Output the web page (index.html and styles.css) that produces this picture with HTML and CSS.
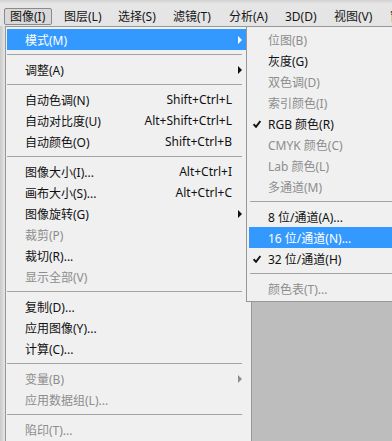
FILE: index.html
```html
<!DOCTYPE html>
<html lang="zh-CN">
<head>
<meta charset="utf-8">
<title>图像菜单</title>
<link rel="stylesheet" href="styles.css">
</head>
<body>
<div class="app">
  <div class="menubar">
    <span class="mb-item active">图像(I)</span>
    <span class="mb-item">图层(L)</span>
    <span class="mb-item">选择(S)</span>
    <span class="mb-item">滤镜(T)</span>
    <span class="mb-item">分析(A)</span>
    <span class="mb-item">3D(D)</span>
    <span class="mb-item">视图(V)</span>
    <span class="mb-item">窗口(W)</span>
  </div>
  <div class="workspace">
    <div class="left-panel"></div>
    <div class="canvas-area"></div>
  </div>

  <div class="menu main-menu">
    <div class="row hl"><span class="label">模式(M)</span><span class="arrow-cell"><i class="tri"></i></span></div>
    <div class="sep"></div>
    <div class="row"><span class="label">调整(A)</span><span class="arrow-cell"><i class="tri"></i></span></div>
    <div class="sep"></div>
    <div class="row"><span class="label">自动色调(N)</span><span class="shortcut">Shift+Ctrl+L</span><span class="arrow-cell"></span></div>
    <div class="row"><span class="label">自动对比度(U)</span><span class="shortcut">Alt+Shift+Ctrl+L</span><span class="arrow-cell"></span></div>
    <div class="row"><span class="label">自动颜色(O)</span><span class="shortcut">Shift+Ctrl+B</span><span class="arrow-cell"></span></div>
    <div class="sep"></div>
    <div class="row"><span class="label">图像大小(I)...</span><span class="shortcut">Alt+Ctrl+I</span><span class="arrow-cell"></span></div>
    <div class="row"><span class="label">画布大小(S)...</span><span class="shortcut">Alt+Ctrl+C</span><span class="arrow-cell"></span></div>
    <div class="row"><span class="label">图像旋转(G)</span><span class="arrow-cell"><i class="tri"></i></span></div>
    <div class="row dis"><span class="label">裁剪(P)</span><span class="arrow-cell"></span></div>
    <div class="row"><span class="label">裁切(R)...</span><span class="arrow-cell"></span></div>
    <div class="row dis"><span class="label">显示全部(V)</span><span class="arrow-cell"></span></div>
    <div class="sep"></div>
    <div class="row"><span class="label">复制(D)...</span><span class="arrow-cell"></span></div>
    <div class="row"><span class="label">应用图像(Y)...</span><span class="arrow-cell"></span></div>
    <div class="row"><span class="label">计算(C)...</span><span class="arrow-cell"></span></div>
    <div class="sep"></div>
    <div class="row dis"><span class="label">变量(B)</span><span class="arrow-cell"><i class="tri"></i></span></div>
    <div class="row dis"><span class="label">应用数据组(L)...</span><span class="arrow-cell"></span></div>
    <div class="sep"></div>
    <div class="row dis"><span class="label">陷印(T)...</span><span class="arrow-cell"></span></div>
  </div>

  <div class="menu sub-menu">
    <div class="srow dis"><span class="check"></span><span class="label">位图(B)</span></div>
    <div class="srow"><span class="check"></span><span class="label">灰度(G)</span></div>
    <div class="srow dis"><span class="check"></span><span class="label">双色调(D)</span></div>
    <div class="srow dis"><span class="check"></span><span class="label">索引颜色(I)</span></div>
    <div class="srow"><span class="check"><svg width="8" height="8" viewBox="0 0 8 8"><path d="M0.6 4.2 L3 6.8 L7.4 1" fill="none" stroke="#111" stroke-width="1.9"/></svg></span><span class="label">RGB 颜色(R)</span></div>
    <div class="srow dis"><span class="check"></span><span class="label">CMYK 颜色(C)</span></div>
    <div class="srow dis"><span class="check"></span><span class="label">Lab 颜色(L)</span></div>
    <div class="srow dis"><span class="check"></span><span class="label">多通道(M)</span></div>
    <div class="ssep"></div>
    <div class="srow"><span class="check"></span><span class="label">8 位/通道(A)...</span></div>
    <div class="srow hl"><span class="check"></span><span class="label">16 位/通道(N)...</span></div>
    <div class="srow"><span class="check"><svg width="8" height="8" viewBox="0 0 8 8"><path d="M0.6 4.2 L3 6.8 L7.4 1" fill="none" stroke="#111" stroke-width="1.9"/></svg></span><span class="label">32 位/通道(H)</span></div>
    <div class="ssep"></div>
    <div class="srow dis"><span class="check"></span><span class="label">颜色表(T)...</span></div>
  </div>
</div>
</body>
</html>
```

FILE: styles.css
```css
* { box-sizing: border-box; }

html, body {
  margin: 0;
  padding: 0;
  width: 392px;
  height: 441px;
  overflow: hidden;
}

body {
  font-family: "Noto Sans", "Noto Sans CJK SC", sans-serif;
  font-size: 12px;
  color: #111;
  background: #bdbdbd;
}

.app {
  position: relative;
  width: 392px;
  height: 441px;
  overflow: hidden;
}

.menubar {
  height: 26px;
  display: grid;
  grid-template-columns: 53px 54px 55px 56px 56px 49px 56px 1fr;
  align-items: start;
  padding: 8px 0 0 4px;
  background: linear-gradient(#d2d2d2, #e6e6e6 4px, #e4e4e4);
  white-space: nowrap;
}

.mb-item {
  height: 17px;
  line-height: 15px;
  padding-left: 6px;
  border: 1px solid transparent;
  color: #151515;
}

.mb-item.active {
  width: 48px;
  padding-left: 5px;
  border-color: #8a8a8a;
  border-radius: 2px;
  background: #d9d9d9;
}

.workspace {
  display: flex;
  height: 415px;
}

.left-panel {
  width: 5px;
  background: linear-gradient(90deg, #c9c9c9, #e6e6e6);
}

.canvas-area {
  flex: 1;
  background: #bdbdbd;
}

.menu {
  position: absolute;
  top: 26px;
  background: #f0f0f0;
  border: 1px solid #979797;
  white-space: nowrap;
}

.main-menu {
  left: 5px;
  width: 247px;
  padding: 2px 1px 30px;
}

.row {
  height: 21px;
  display: flex;
  align-items: center;
  padding-left: 18px;
}

.shortcut {
  margin-left: auto;
}

.arrow-cell {
  flex: none;
  width: 18px;
  height: 21px;
  margin-left: auto;
  padding-left: 6px;
  display: flex;
  align-items: center;
}

.shortcut + .arrow-cell {
  margin-left: 0;
}

.tri {
  display: block;
  width: 0;
  height: 0;
  border-top: 4px solid transparent;
  border-bottom: 4px solid transparent;
  border-left: 4px solid #111;
}

.row.hl,
.srow.hl {
  background: #3399ff;
  color: #fff;
}

.row.hl .tri {
  border-left-color: #fff;
}

.dis {
  color: #8d8d8d;
}

.row.dis .tri {
  border-left-color: #8d8d8d;
}

.sep {
  height: 1px;
  margin: 4px 8px 4px 0;
  background: #a3a3a3;
}

.sub-menu {
  left: 246px;
  width: 170px;
  padding: 2px 0 2px 2px;
}

.srow {
  height: 21px;
  display: flex;
  align-items: center;
}

.check {
  flex: none;
  width: 19px;
  height: 21px;
  padding-left: 4px;
  display: flex;
  align-items: center;
}

.check svg {
  display: block;
}

.ssep {
  height: 1px;
  margin: 4px 0 4px 1px;
  background: #a3a3a3;
}
```
